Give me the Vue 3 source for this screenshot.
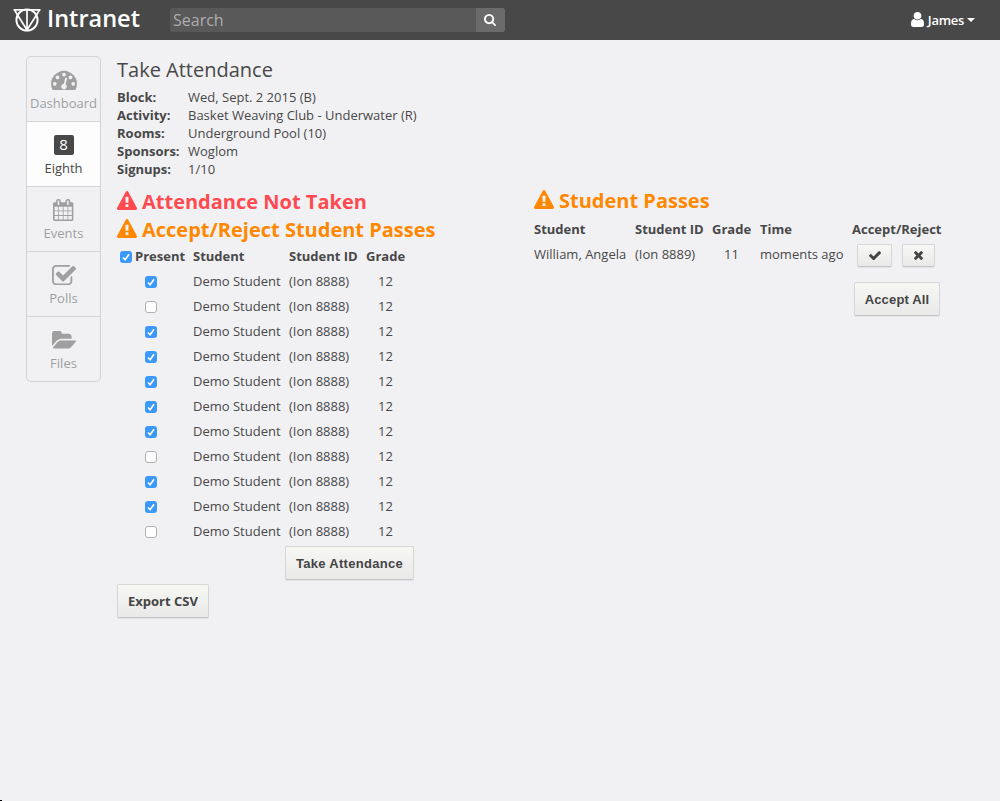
<script setup>
import { reactive } from 'vue'

const icons = {
  dashboard: { box: '0 128 1792 1408', w: 26, h: 20.4, d: 'M384 1152q0-53-37.5-90.5t-90.5-37.5-90.5 37.5-37.5 90.5 37.5 90.5 90.5 37.5 90.5-37.5 37.5-90.5zm192-448q0-53-37.5-90.5t-90.5-37.5-90.5 37.5-37.5 90.5 37.5 90.5 90.5 37.5 90.5-37.5 37.5-90.5zm428 481l101-382q6-26-7.5-48.5t-38.5-29.5-48 6.5-30 39.5l-101 382q-60 5-107 43.5t-63 98.5q-20 77 20 146t117 89 146-20 89-117q16-60-6-117t-72-91zm660-33q0-53-37.5-90.5t-90.5-37.5-90.5 37.5-37.5 90.5 37.5 90.5 90.5 37.5 90.5-37.5 37.5-90.5zm-640-640q0-53-37.5-90.5t-90.5-37.5-90.5 37.5-37.5 90.5 37.5 90.5 90.5 37.5 90.5-37.5 37.5-90.5zm448 192q0-53-37.5-90.5t-90.5-37.5-90.5 37.5-37.5 90.5 37.5 90.5 90.5 37.5 90.5-37.5 37.5-90.5zm320 448q0 261-141 483-19 29-54 29h-1402q-35 0-54-29-141-221-141-483 0-182 71-348t191-286 286-191 348-71 348 71 286 191 191 286 71 348z' },
  calendar: { box: '64 0 1664 1792', w: 20.4, h: 22, d: 'M192 1664h288v-288h-288v288zm352 0h320v-288h-320v288zm-352-352h288v-320h-288v320zm352 0h320v-320h-320v320zm-352-384h288v-288h-288v288zm736 736h320v-288h-320v288zm-384-736h320v-288h-320v288zm768 736h288v-288h-288v288zm-384-352h320v-320h-320v320zm-352-864v-288q0-13-9.500-22.500t-22.500-9.500h-64q-13 0-22.500 9.500t-9.500 22.500v288q0 13 9.500 22.500t22.500 9.500h64q13 0 22.500-9.500t9.500-22.500zm736 864h288v-320h-288v320zm-384-384h320v-288h-320v288zm384 0h288v-288h-288v288zm32-480v-288q0-13-9.500-22.500t-22.500-9.500h-64q-13 0-22.500 9.500t-9.500 22.500v288q0 13 9.500 22.500t22.500 9.500h64q13 0 22.500-9.500t9.500-22.500zm384-64v1280q0 52-38 90t-90 38h-1408q-52 0-90-38t-38-90v-1280q0-52 38-90t90-38h128v-96q0-66 47-113t113-47h64q66 0 113 47t47 113v96h384v-96q0-66 47-113t113-47h64q66 0 113 47t47 113v96h128q52 0 90 38t38 90z' },
  polls: { box: '64 128 1664 1408', w: 24, h: 20.3, d: 'M1472 930v318q0 119-84.500 203.500t-203.500 84.500h-832q-119 0-203.500-84.500t-84.500-203.500v-832q0-119 84.500-203.500t203.500-84.500h832q63 0 117 25 15 7 18 23 3 17-9 29l-49 49q-10 10-23 10-3 0-9-2-23-6-45-6h-832q-66 0-113 47t-47 113v832q0 66 47 113t113 47h832q66 0 113-47t47-113v-254q0-13 9-22l64-64q10-10 23-10 6 0 12 3 20 8 20 29zm231-489l-814 814q-24 24-57 24t-57-24l-430-430q-24-24-24-57t24-57l110-110q24-24 57-24t57 24l263 263 647-647q24-24 57-24t57 24l110 110q24 24 24 57t-24 57z' },
  folder: { box: '0 216 1880 1376', w: 24, h: 17.6, d: 'M1879 1008q0 31-31 66l-336 396q-43 51-120.500 86.500t-143.500 35.500h-1088q-34 0-60.500-13t-26.500-43q0-31 31-66l336-396q43-51 120.500-86.500t143.500-35.500h1088q34 0 60.500 13t26.500 43zm-343-344v160h-832q-94 0-197 47.500t-164 119.500l-337 396-5 6q0-4-.5-12.500t-.5-12.500v-960q0-92 66-158t158-66h320q92 0 158 66t66 158v32h544q92 0 158 66t66 158z' }
}
const warn = 'M1024 1375v-190q0-14-9.500-23.500t-22.500-9.500h-192q-13 0-22.500 9.500t-9.500 23.500v190q0 14 9.500 23.500t22.500 9.500h192q13 0 22.500-9.500t9.500-23.500zm-2-374l18-459q0-12-10-19-13-11-24-11h-220q-11 0-24 11-10 7-10 21l17 457q0 10 10 16.500t24 6.500h185q14 0 23.500-6.500t10.500-16.500zm-14-934l768 1408q35 63-2 126-17 29-46.500 46t-63.500 17h-1536q-34 0-63.500-17t-46.500-46q-37-63-2-126l768-1408q17-31 47-49t65-18 65 18 47 49z'

const nav = [
  { label: 'Dashboard', icon: icons.dashboard },
  { label: 'Eighth', active: true },
  { label: 'Events', icon: icons.calendar },
  { label: 'Polls', icon: icons.polls },
  { label: 'Files', icon: icons.folder }
]
const details = [
  ['Block:', 'Wed, Sept. 2 2015 (B)'],
  ['Activity:', 'Basket Weaving Club - Underwater (R)'],
  ['Rooms:', 'Underground Pool (10)'],
  ['Sponsors:', 'Woglom'],
  ['Signups:', '1/10']
]
const rows = reactive([1, 0, 1, 1, 1, 1, 1, 0, 1, 1, 0].map(p => ({ present: !!p })))
</script>

<template>
  <div class="page">
    <header class="bar">
      <svg class="logo" width="28" height="24" viewBox="0 0 28 24" fill="none" stroke="#fff" stroke-width="1.700">
        <circle cx="14" cy="12" r="10.600" stroke-width="1.900" />
        <path d="M.5 1.800H27.500M1.500 1.800L4.500 7L14 22L23.500 7L26.500 1.800M14 1.500V22.500" />
      </svg>
      <span class="brand">Intranet</span>
      <div class="search">
        <span class="field">Search</span>
        <span class="go">
          <svg width="12" height="12" viewBox="64 128 1664 1664"><path fill="#fff" d="M1216 832q0-185-131.500-316.500t-316.500-131.500-316.500 131.500-131.500 316.500 131.500 316.500 316.500 131.500 316.500-131.500 131.500-316.500zm512 832q0 52-38 90t-90 38q-54 0-90-38l-343-342q-179 124-399 124-143 0-273.500-55.500t-225-150-150-225-55.500-273.500 55.500-273.500 150-225 225-150 273.500-55.500 273.500 55.500 225 150 150 225 55.500 273.500q0 220-124 399l343 343q37 37 37 90z" /></svg>
        </span>
      </div>
      <div class="user">
        <svg width="13" height="15" viewBox="256 128 1280 1536" preserveAspectRatio="none"><path fill="#fff" d="M1536 1399q0 109-62.500 187t-150.500 78h-854q-88 0-150.500-78t-62.500-187q0-85 8.500-160.500t31.500-152 58.500-131 94-89 134.500-34.500q131 128 313 128t313-128q76 0 134.500 34.500t94 89 58.500 131 31.500 152 8.500 160.500zm-256-887q0 159-112.500 271.500t-271.500 112.500-271.500-112.500-112.500-271.500 112.500-271.500 271.500-112.500 271.500 112.500 112.500 271.500z" /></svg>
        <span class="name">James</span>
        <span class="caret"></span>
      </div>
    </header>

    <div class="body">
      <nav class="side">
        <a v-for="n in nav" :key="n.label" class="item" :class="{ active: n.active }">
          <span class="pic">
            <svg v-if="n.icon" :width="n.icon.w" :height="n.icon.h" :viewBox="n.icon.box"><path fill="currentColor" :d="n.icon.d" /></svg>
            <span v-else class="eight">8</span>
          </span>
          <span class="label">{{ n.label }}</span>
        </a>
      </nav>

      <main class="main">
        <h2>Take Attendance</h2>
        <dl class="details">
          <template v-for="[k, v] in details" :key="k"><dt>{{ k }}</dt><dd>{{ v }}</dd></template>
        </dl>
        <div class="cols">
          <section class="left">
            <h3 class="red"><svg width="20" height="19" viewBox="0 0 1792 1664" preserveAspectRatio="none"><path fill="currentColor" :d="warn" /></svg><span>Attendance Not Taken</span></h3>
            <h3><svg width="20" height="19" viewBox="0 0 1792 1664" preserveAspectRatio="none"><path fill="currentColor" :d="warn" /></svg><span>Accept/Reject Student Passes</span></h3>
            <div class="row head">
              <span class="all"><i class="box on"><svg width="12" height="12" viewBox="0 0 12 12"><path d="M3 6.500L5.100 8.700L9 3.300" fill="none" stroke="#fff" stroke-width="1.600" /></svg></i>Present</span>
              <span>Student</span><span>Student ID</span><span>Grade</span>
            </div>
            <div v-for="(r, i) in rows" :key="i" class="row" @click="r.present = !r.present">
              <span class="tick"><i class="box" :class="{ on: r.present }"><svg v-if="r.present" width="12" height="12" viewBox="0 0 12 12"><path d="M3 6.500L5.100 8.700L9 3.300" fill="none" stroke="#fff" stroke-width="1.600" /></svg></i></span>
              <span>Demo Student</span><span>(Ion 8888)</span><span class="grade">12</span>
            </div>
            <button class="btn plain take">Take Attendance</button>
            <button class="btn export">Export CSV</button>
          </section>

          <section class="right">
            <h3><svg width="20" height="19" viewBox="0 0 1792 1664" preserveAspectRatio="none"><path fill="currentColor" :d="warn" /></svg><span>Student Passes</span></h3>
            <div class="prow head"><span>Student</span><span>Student ID</span><span>Grade</span><span>Time</span><span>Accept/Reject</span></div>
            <div class="prow">
              <span>William, Angela</span><span>(Ion 8889)</span><span class="grade">11</span><span>moments ago</span>
              <span class="acts">
                <button class="btn small yes"><svg width="12" height="9.500" viewBox="121 334 1550 1188"><path fill="currentColor" d="M1671 566q0 40-28 68l-724 724-136 136q-28 28-68 28t-68-28l-136-136-362-362q-28-28-28-68t28-68l136-136q28-28 68-28t68 28l294 295 656-657q28-28 68-28t68 28l136 136q28 28 28 68z" /></svg></button>
                <button class="btn small no"><svg width="9" height="9" viewBox="302 366 1188 1188"><path fill="currentColor" d="M1490 1322q0 40-28 68l-136 136q-28 28-68 28t-68-28l-294-294-294 294q-28 28-68 28t-68-28l-136-136q-28-28-28-68t28-68l294-294-294-294q-28-28-28-68t28-68l136-136q28-28 68-28t68 28l294 294 294-294q28-28 68-28t68 28l136 136q28 28 28 68t-28 68l-294 294 294 294q28 28 28 68z" /></svg></button>
              </span>
            </div>
            <button class="btn plain accept">Accept All</button>
          </section>
        </div>
      </main>
    </div>
    <div class="corner"></div>
  </div>
</template>

<style>
html, body { background: #fff; overflow: hidden; }
</style>

<style scoped>
* { box-sizing: border-box; }
.page { position: relative; width: 1000px; height: 801px; background: #f1f1f4; color: #484848; font: 13px/18px "Open Sans", sans-serif; }
.bar { display: flex; align-items: center; height: 40px; background: #484848; color: #fff; padding-left: 13px; }
.logo { flex: none; display: block; }
.brand { width: 123px; margin-left: 6px; font-size: 23.5px; font-weight: 600; line-height: 37px; height: 40px; }
.search { display: flex; width: 335px; height: 24px; border-radius: 3px; overflow: hidden; background: #595959; }
.field { flex: 1; padding-left: 3px; font-size: 16px; line-height: 24px; color: #adadad; }
.go { display: flex; align-items: center; justify-content: center; width: 29px; padding-right: 1px; background: #6b6b6b; }
.user { display: flex; align-items: center; margin-left: auto; padding-right: 25px; }
.user svg { display: block; margin-top: -2px; }
.name { margin-left: 4px; font-weight: 600; font-size: 13px; letter-spacing: -.3px; }
.caret { margin-left: 3px; border: 4px solid transparent; border-top-color: #fff; border-bottom: 0; }
.body { display: flex; padding: 16px 0 0 26px; }
.side { flex: none; width: 75px; height: 326px; border: 1px solid #d4d4d6; border-radius: 5px; overflow: hidden; }
.item { display: flex; flex-direction: column; align-items: center; height: 65px; color: #9f9f9f; border-bottom: 1px solid #d4d4d6; }
.item:last-child { border-bottom: 0; }
.item:first-child svg { margin-top: -1px; }
.active { color: #484848; background: #fdfdfd; }
.pic { display: flex; align-items: center; justify-content: center; height: 20px; margin-top: 13px; }
.label { margin-top: 4px; }
.eight { width: 20px; height: 20px; border-radius: 2px; background: #484848; color: #fff; text-align: center; font-size: 15px; line-height: 19px; }
.main { flex: 1; margin-left: 16px; }
h2 { margin: 0; font-size: 20px; font-weight: 400; line-height: 28px; }
.details { display: grid; grid-template-columns: 71px 1fr; margin: 4px 0 0; }
dt { font-weight: 700; }
dd { margin: 0; }
.cols { display: flex; margin-top: 9px; }
.left { width: 417px; }
h3 { display: flex; align-items: center; gap: 5px; margin: 0; height: 28px; font-size: 20px; line-height: 28px; font-weight: 700; color: #ff8800; white-space: nowrap; }
h3 svg { margin-top: -1px; }
h3 span { padding-top: 2px; }
.red { color: #ff4a50; }
.row, .prow { display: grid; height: 25px; line-height: 25px; white-space: nowrap; }
.row { grid-template-columns: 76px 96px 77px 44px; }
.row.head { margin-top: 1px; }
.head { font-weight: 700; }
.all { display: flex; align-items: center; padding-left: 3px; gap: 3px; }
.tick { display: flex; align-items: center; padding-left: 28px; }
.box { display: block; width: 12px; height: 12px; margin-top: 1px; border: 1px solid #b0b0b0; border-radius: 3px; background: #fff; }
.box.on { background: #3b99fc; border: 0; }
.box svg { display: block; }
.grade { padding-left: 12px; }
.btn { display: flex; align-items: center; justify-content: center; height: 34px; padding: 0; border: 1px solid #d6d6d6; border-bottom-color: #c4c4c4; border-radius: 2px; background: linear-gradient(#f7f7f4, #e9e9e9); color: #444; font: 700 13px/18px "Open Sans", sans-serif; box-shadow: 0 1px 1px rgba(0, 0, 0, .06); white-space: nowrap; }
.plain { padding-top: 2px; font-family: "Liberation Sans", sans-serif; letter-spacing: .3px; }
.take { width: 129px; margin: 2px 0 0 168px; }
.export { width: 92px; margin-top: 4px; }
.prow { grid-template-columns: 101px 77px 48px 92px 96px; }
.right { margin-top: -1px; }
.right .head { margin-top: 3px; }
.acts { display: flex; align-items: flex-start; padding: 2px 0 0 5px; gap: 10px; }
.small { height: 23px; }
.yes { width: 35px; }
.no { width: 33px; }
.accept { width: 86px; margin: 15px 0 0 320px; letter-spacing: .15px; }
.corner { position: absolute; left: 0; bottom: 0; width: 2px; height: 1px; background: #000; }
</style>
